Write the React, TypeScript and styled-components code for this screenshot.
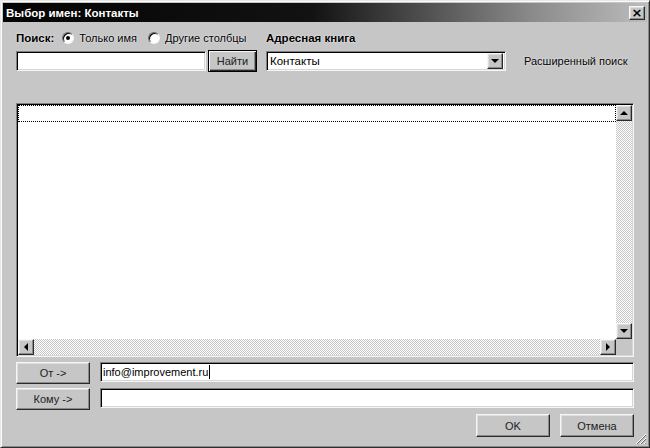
import React from "react";
import styled, { createGlobalStyle, css } from "styled-components";

const GlobalStyle = createGlobalStyle`
  html, body { margin: 0; padding: 0; background: #c6c6c6; }
  body { font-family: "Liberation Sans", Arial, sans-serif; font-size: 11px; color: #000; }
  * { box-sizing: border-box; }
`;

const raised = css`
  border: 1px solid;
  border-color: #f6f6f6 #2a2a2a #2a2a2a #f6f6f6;
  box-shadow: inset -1px -1px 0 #8a8a8a, inset 1px 1px 0 #dedede;
  background: #c6c6c6;
`;

const sunken = css`
  border: 1px solid;
  border-color: #808080 #f6f6f6 #f6f6f6 #808080;
  box-shadow: inset 1px 1px 0 #000, inset -1px -1px 0 #d6d6d6;
  background: #fff;
`;

const Window = styled.div`
  position: relative;
  width: 650px;
  height: 448px;
  border: 1px solid;
  border-color: #e8e8e8 #2e2e2e #2e2e2e #e8e8e8;
  box-shadow: inset 1px 1px 0 #fafafa, inset -1px -1px 0 #8a8a8a;
  padding: 2px;
  background: #c6c6c6;
  display: flex;
  flex-direction: column;
`;

const TitleBar = styled.div`
  height: 19px;
  flex: none;
  background: linear-gradient(to right, #040404 0%, #121212 48%, #8a8a8a 82%, #bcbcbc 100%);
  display: flex;
  align-items: center;
  justify-content: space-between;
  padding: 0 2px 0 3px;
`;

const Title = styled.span`
  color: #fff;
  font-weight: bold;
  font-size: 11.5px;
`;

const CloseButton = styled.div`
  ${raised}
  width: 16px;
  height: 14px;
  display: flex;
  align-items: center;
  justify-content: center;
  font-size: 13px;
  font-weight: bold;
  line-height: 1;
  font-family: "DejaVu Sans", sans-serif;
`;

const Body = styled.div`
  flex: 1;
  display: flex;
  flex-direction: column;
  padding: 8px 13px 0 13px;
`;

const SearchGrid = styled.div`
  display: grid;
  grid-template-columns: 250px 240px 1fr;
  grid-template-rows: 15px 23px;
  row-gap: 4px;
  align-items: center;
`;

const Options = styled.div`
  display: flex;
  align-items: center;
  white-space: nowrap;
`;

const BoldLabel = styled.span`
  font-weight: bold;
  font-size: 11.5px;
  text-shadow: 0 0 2px #fff;
`;

const Label = styled.span<{ $gapLeft?: number }>`
  margin-left: ${(p) => p.$gapLeft ?? 0}px;
  white-space: nowrap;
  text-shadow: 0 0 2px #fff;
`;

const Radio = styled.span<{ $checked?: boolean; $gapLeft: number }>`
  position: relative;
  width: 12px;
  height: 12px;
  margin-left: ${(p) => p.$gapLeft}px;
  border-radius: 50%;
  background: #fff;
  border: 1px solid;
  border-color: #6a6a6a #f4f4f4 #f4f4f4 #6a6a6a;
  box-shadow: inset 1px 1px 0 #000;
  flex: none;
  &::after {
    content: "";
    display: ${(p) => (p.$checked ? "block" : "none")};
    position: absolute;
    left: 3px;
    top: 3px;
    width: 4px;
    height: 4px;
    border-radius: 50%;
    background: #000;
  }
`;

const SearchRow = styled.div`
  display: flex;
  align-items: center;
  gap: 2px;
`;

const TextInput = styled.div<{ $width?: number; $height?: number }>`
  ${sunken}
  width: ${(p) => (p.$width ? `${p.$width}px` : "auto")};
  flex: ${(p) => (p.$width ? "none" : "1")};
  height: ${(p) => p.$height ?? 20}px;
  padding: 2px 2px;
  display: flex;
  align-items: center;
  white-space: nowrap;
  font-size: 11px;
`;

const Caret = styled.span`
  display: inline-block;
  width: 1px;
  height: 14px;
  background: #000;
  margin-left: 1px;
`;

const PushButton = styled.div<{ $width: number; $height: number; $default?: boolean }>`
  ${raised}
  width: ${(p) => p.$width}px;
  height: ${(p) => p.$height}px;
  display: flex;
  align-items: center;
  justify-content: center;
  color: #222;
  flex: none;
  ${(p) =>
    p.$default &&
    css`
      border: 1px solid #000;
      box-shadow: inset 1px 1px 0 #f6f6f6, inset -1px -1px 0 #2a2a2a, inset -2px -2px 0 #8a8a8a;
    `}
`;

const Combo = styled.div`
  ${sunken}
  width: 240px;
  height: 20px;
  display: flex;
  align-items: center;
  justify-content: space-between;
  padding: 1px 2px 1px 3px;
  font-size: 11.5px;
`;

const Arrow = styled.span<{ $dir: "up" | "down" | "left" | "right" }>`
  width: 0;
  height: 0;
  border-style: solid;
  ${(p) =>
    p.$dir === "up"
      ? "border-width: 0 4px 4px 4px; border-color: transparent transparent #000 transparent;"
      : p.$dir === "down"
      ? "border-width: 4px 4px 0 4px; border-color: #000 transparent transparent transparent;"
      : p.$dir === "left"
      ? "border-width: 4px 4px 4px 0; border-color: transparent #000 transparent transparent;"
      : "border-width: 4px 0 4px 4px; border-color: transparent transparent transparent #000;"}
`;

const ScrollButton = styled.div`
  ${raised}
  width: 16px;
  height: 16px;
  flex: none;
  display: flex;
  align-items: center;
  justify-content: center;
`;

const Advanced = styled.span`
  padding-left: 18px;
  white-space: nowrap;
  text-shadow: 0 0 2px #fff;
`;

const ListBox = styled.div`
  margin-top: 31px;
  height: 254px;
  border: 1px solid;
  border-color: #808080 #f6f6f6 #f6f6f6 #808080;
  box-shadow: inset 1px 1px 0 #000, inset -1px -1px 0 #d6d6d6;
  padding: 1px;
  background: #fff;
  display: grid;
  grid-template-columns: 1fr 16px;
  grid-template-rows: 1fr 16px;
`;

const ListMain = styled.div`
  background: #fff;
`;

const FocusRow = styled.div`
  height: 17px;
  border: 1px dotted #000;
`;

const Track = styled.div`
  flex: 1;
  background: repeating-conic-gradient(#c6c6c6 0 25%, #ffffff 0 50%) 0 0 / 2px 2px;
`;

const VScroll = styled.div`
  display: flex;
  flex-direction: column;
`;

const HScroll = styled.div`
  display: flex;
`;

const Corner = styled.div`
  background: #c6c6c6;
`;

const RecipientRow = styled.div<{ $top: number }>`
  display: flex;
  align-items: flex-start;
  gap: 10px;
  margin-top: ${(p) => p.$top}px;
`;

const Footer = styled.div`
  display: flex;
  justify-content: flex-end;
  gap: 10px;
  margin-top: 4px;
`;

const Grip = styled.svg`
  position: absolute;
  right: 2px;
  bottom: 2px;
`;

export default function App() {
  return (
    <>
      <GlobalStyle />
      <Window>
        <TitleBar>
          <Title>Выбор имен: Контакты</Title>
          <CloseButton>×</CloseButton>
        </TitleBar>
        <Body>
          <SearchGrid>
            <Options>
              <BoldLabel>Поиск:</BoldLabel>
              <Radio $checked $gapLeft={8} />
              <Label $gapLeft={5}>Только имя</Label>
              <Radio $gapLeft={11} />
              <Label $gapLeft={5}>Другие столбцы</Label>
            </Options>
            <BoldLabel>Адресная книга</BoldLabel>
            <span />
            <SearchRow>
              <TextInput $width={190} />
              <PushButton $width={49} $height={22} $default>
                Найти
              </PushButton>
            </SearchRow>
            <Combo>
              <span>Контакты</span>
              <ScrollButton>
                <Arrow $dir="down" />
              </ScrollButton>
            </Combo>
            <Advanced>Расширенный поиск</Advanced>
          </SearchGrid>

          <ListBox>
            <ListMain>
              <FocusRow />
            </ListMain>
            <VScroll>
              <ScrollButton>
                <Arrow $dir="up" />
              </ScrollButton>
              <Track />
              <ScrollButton>
                <Arrow $dir="down" />
              </ScrollButton>
            </VScroll>
            <HScroll>
              <ScrollButton>
                <Arrow $dir="left" />
              </ScrollButton>
              <Track />
              <ScrollButton>
                <Arrow $dir="right" />
              </ScrollButton>
            </HScroll>
            <Corner />
          </ListBox>

          <RecipientRow $top={5}>
            <PushButton $width={74} $height={22}>
              От -&gt;
            </PushButton>
            <TextInput>
              info@improvement.ru
              <Caret />
            </TextInput>
          </RecipientRow>
          <RecipientRow $top={4}>
            <PushButton $width={74} $height={22}>
              Кому -&gt;
            </PushButton>
            <TextInput />
          </RecipientRow>

          <Footer>
            <PushButton $width={74} $height={23}>
              OK
            </PushButton>
            <PushButton $width={74} $height={23}>
              Отмена
            </PushButton>
          </Footer>
        </Body>
        <Grip width="12" height="12" viewBox="0 0 12 12">
          <g strokeWidth="1">
            <line x1="11" y1="1" x2="1" y2="11" stroke="#fff" />
            <line x1="11" y1="2" x2="2" y2="11" stroke="#6a6a6a" />
            <line x1="11" y1="5" x2="5" y2="11" stroke="#fff" />
            <line x1="11" y1="6" x2="6" y2="11" stroke="#6a6a6a" />
            <line x1="11" y1="9" x2="9" y2="11" stroke="#fff" />
            <line x1="11" y1="10" x2="10" y2="11" stroke="#6a6a6a" />
          </g>
        </Grip>
      </Window>
    </>
  );
}
